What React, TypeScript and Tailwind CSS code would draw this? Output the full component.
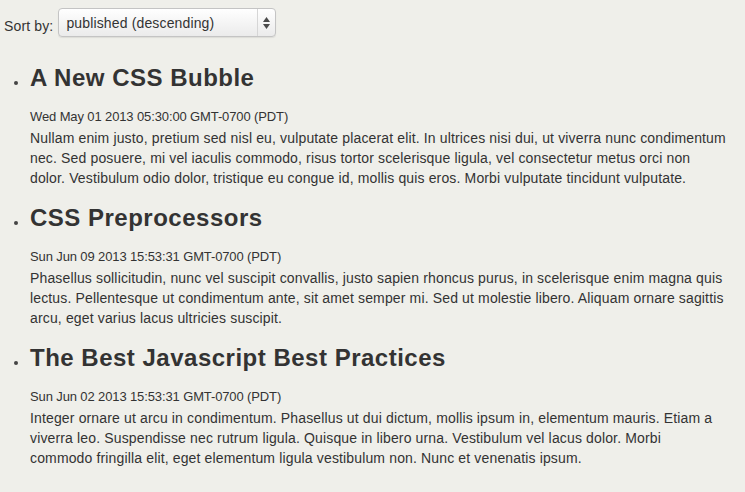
const posts = [
  {
    title: 'A New CSS Bubble',
    date: 'Wed May 01 2013 05:30:00 GMT-0700 (PDT)',
    body: 'Nullam enim justo, pretium sed nisl eu, vulputate placerat elit. In ultrices nisi dui, ut viverra nunc condimentum nec. Sed posuere, mi vel iaculis commodo, risus tortor scelerisque ligula, vel consectetur metus orci non dolor. Vestibulum odio dolor, tristique eu congue id, mollis quis eros. Morbi vulputate tincidunt vulputate.',
    bodyClass: '',
  },
  {
    title: 'CSS Preprocessors',
    date: 'Sun Jun 09 2013 15:53:31 GMT-0700 (PDT)',
    body: 'Phasellus sollicitudin, nunc vel suscipit convallis, justo sapien rhoncus purus, in scelerisque enim magna quis lectus. Pellentesque ut condimentum ante, sit amet semper mi. Sed ut molestie libero. Aliquam ornare sagittis arcu, eget varius lacus ultricies suscipit.',
    bodyClass: '',
  },
  {
    title: 'The Best Javascript Best Practices',
    date: 'Sun Jun 02 2013 15:53:31 GMT-0700 (PDT)',
    body: 'Integer ornare ut arcu in condimentum. Phasellus ut dui dictum, mollis ipsum in, elementum mauris. Etiam a viverra leo. Suspendisse nec rutrum ligula. Quisque in libero urna. Vestibulum vel lacus dolor. Morbi commodo fringilla elit, eget elementum ligula vestibulum non. Nunc et venenatis ipsum.',
    // helvetica wraps "commodo" here, liberation squeezes it in
    bodyClass: 'pr-[5px]',
  },
]

function SortSelect() {
  return (
    <div className="ml-[5px] flex h-[29px] w-[218px] rounded-[4px] border border-[#c4c4c4] bg-gradient-to-b from-white to-[#ebebeb] shadow-[0_1px_1px_rgba(0,0,0,0.08)]">
      <div className="flex-1 pl-[7px] pt-[4px] text-[14px] leading-[20px] text-[#333]">published (descending)</div>
      <div className="flex w-[18px] flex-col items-center justify-center gap-[2px] border-l border-[#d6d6d6]">
        <svg width="7" height="5" viewBox="0 0 7 5"><path d="M3.5 0 L7 5 L0 5 Z" fill="#4a4a4a" /></svg>
        <svg width="7" height="5" viewBox="0 0 7 5"><path d="M0 0 L7 0 L3.5 5 Z" fill="#4a4a4a" /></svg>
      </div>
    </div>
  )
}

export default function App() {
  return (
    <div className="min-h-screen bg-[#efefea] pr-[17px] tracking-[0.145px] text-[#333] [font-family:'Liberation_Sans',Arial,sans-serif]">
      {/* sort bar */}
      <div className="flex items-start pl-[4px] pt-[8px]">
        <span className="mt-[8px] text-[14px] leading-[20px]">Sort by:</span>
        <SortSelect />
      </div>

      {/* posts */}
      <ul className="mt-[27px]">
        {posts.map((p) => (
          <li key={p.title} className="mb-[16px] flex">
            <div className="w-[30px] shrink-0">
              <div className="ml-[14px] mt-[17px] h-[4px] w-[4px] rounded-full bg-[#444]" />
            </div>
            <div className="flex-1">
              <h2 className="text-[24px] font-bold leading-[28px] tracking-[0.5px] text-[#333]">{p.title}</h2>
              <div className="mt-[16px] text-[13px] leading-[18px] tracking-[-0.12px]">{p.date}</div>
              <p className={`mt-[2px] text-[14px] leading-[20px] ${p.bodyClass}`}>{p.body}</p>
            </div>
          </li>
        ))}
      </ul>
    </div>
  )
}
